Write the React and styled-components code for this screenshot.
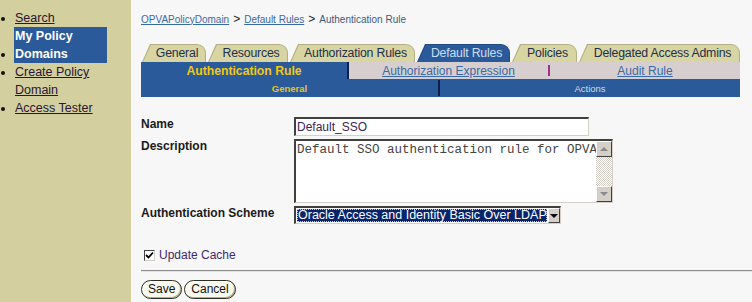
import styled, { createGlobalStyle } from "styled-components";

const GlobalStyle = createGlobalStyle`
  body {
    margin: 0;
    background: #f7f7f7;
    font-family: "Liberation Sans", Arial, sans-serif;
    overflow: hidden;
  }
`;

const tabs = [
  { label: "General", width: 64 },
  { label: "Resources", width: 80 },
  { label: "Authorization Rules", width: 125 },
  { label: "Default Rules", width: 93, active: true },
  { label: "Policies", width: 65 },
  { label: "Delegated Access Admins", width: 161 },
];

export default function App() {
  return (
    <Page>
      <GlobalStyle />
      <Sidebar>
        <NavList>
          <NavItem><NavLink href="#">Search</NavLink></NavItem>
          <NavItem><NavCurrent>My Policy Domains</NavCurrent></NavItem>
          <NavItem><NavLink href="#">Create Policy Domain</NavLink></NavItem>
          <NavItem><NavLink href="#">Access Tester</NavLink></NavItem>
        </NavList>
      </Sidebar>
      <Main>
        <Crumbs>
          <CrumbLink href="#">OPVAPolicyDomain</CrumbLink>
          <CrumbSep>&gt;</CrumbSep>
          <CrumbLink href="#">Default Rules</CrumbLink>
          <CrumbSep>&gt;</CrumbSep>
          <CrumbText>Authentication Rule</CrumbText>
        </Crumbs>

        <TabRow>
          {tabs.map(t => (
            <Tab key={t.label} $w={t.width} $active={t.active}>
              <span>{t.label}</span>
            </Tab>
          ))}
        </TabRow>

        <SubTabs>
          <SubCurrent>Authentication Rule</SubCurrent>
          <SubCell><SubLink href="#">Authorization Expression</SubLink></SubCell>
          <SubSep />
          <SubCell><SubLink href="#">Audit Rule</SubLink></SubCell>
        </SubTabs>
        <SectionBar>
          <SectionCell $current>General</SectionCell>
          <SectionCell>Actions</SectionCell>
        </SectionBar>

        <Form>
          <Label>Name</Label>
          <TextInput>Default_SSO</TextInput>
          <Label>Description</Label>
          <TextArea>
            <AreaText>Default SSO authentication rule for OPVA</AreaText>
            <ScrollBar>
              <ScrollBtn><Arrow $up /></ScrollBtn>
              <ScrollTrack />
              <ScrollBtn><Arrow /></ScrollBtn>
            </ScrollBar>
          </TextArea>
          <Label>Authentication Scheme</Label>
          <Select>
            <SelectValue><span>Oracle Access and Identity Basic Over LDAP</span></SelectValue>
            <SelectBtn><Arrow $dark /></SelectBtn>
          </Select>
        </Form>

        <CheckRow>
          <CheckBox>
            <svg width="9" height="9" viewBox="0 0 9 9">
              <path d="M1 4 L3.5 6.5 L8 1.5" stroke="#000" strokeWidth="1.8" fill="none" />
            </svg>
          </CheckBox>
          <CheckLabel>Update Cache</CheckLabel>
        </CheckRow>

        <Rule />

        <Buttons>
          <Button>Save</Button>
          <Button>Cancel</Button>
        </Buttons>
      </Main>
    </Page>
  );
}

const Page = styled.div`
  display: flex;
  height: 302px;
`;

const Sidebar = styled.div`
  width: 131px;
  flex-shrink: 0;
  background: #d3cf9e;
`;

const NavList = styled.ul`
  margin: 0;
  padding: 9px 0 0 15px;
  list-style: disc;
  font-size: 12.5px;
  line-height: 18px;
  color: #111;
`;

const NavItem = styled.li``;

const NavLink = styled.a`
  color: #2a1630;
  text-decoration: underline;
`;

const NavCurrent = styled.span`
  display: inline-block;
  width: 92px;
  background: #2b5a9b;
  color: #fff;
  font-weight: bold;
  padding-left: 1px;
  margin-left: -1px;
`;

const Main = styled.div`
  flex: 1;
  padding: 12px 0 0 10px;
`;

const Crumbs = styled.div`
  height: 14px;
  display: flex;
  align-items: center;
  font-size: 10px;
`;

const CrumbLink = styled.a`
  color: #3a6aa6;
  text-decoration: underline;
`;

const CrumbSep = styled.span`
  font-size: 12px;
  color: #222;
  margin: 0 4px;
`;

const CrumbText = styled.span`
  color: #3d5c80;
`;

const TabRow = styled.div`
  display: flex;
  gap: 2px;
  margin: 18px 0 0 1px;
  height: 18px;
  width: 598px;
`;

const Tab = styled.div`
  position: relative;
  width: ${p => p.$w}px;
  height: 18px;
  display: flex;
  align-items: center;
  justify-content: center;
  padding-left: 6px;
  box-sizing: border-box;
  font-size: 12.3px;
  letter-spacing: -0.2px;
  color: ${p => (p.$active ? "#c9ddf6" : "#1d2f4c")};
  background: ${p => (p.$active ? "#1f4a86" : "#b3af84")};
  clip-path: polygon(0 100%, 8px 0, 100% 0, 100% 100%);
  border-top-right-radius: 9px;
  &::before {
    content: "";
    position: absolute;
    inset: 1px 1px 0 1px;
    background: ${p => (p.$active ? "#2b5a9b" : "#d8d5a3")};
    clip-path: polygon(0 100%, 8px 0, 100% 0, 100% 100%);
    border-top-right-radius: 8px;
  }
  span {
    position: relative;
  }
`;

const SubTabs = styled.div`
  display: grid;
  grid-template-columns: 208px 199px 2px 1fr;
  width: 599px;
  height: 17px;
  background: #d7cfcf;
`;

const SubCurrent = styled.div`
  background: #2b5a9b;
  border-right: 2px solid #0d1f4c;
  color: #f2c811;
  font-weight: bold;
  font-size: 12.2px;
  display: flex;
  align-items: center;
  justify-content: center;
`;

const SubCell = styled.div`
  display: flex;
  align-items: center;
  justify-content: center;
`;

const SubLink = styled.a`
  color: #3a6aa6;
  font-size: 12px;
  text-decoration: underline;
`;

const SubSep = styled.div`
  align-self: center;
  height: 11px;
  background: #a0308c;
`;

const SectionBar = styled.div`
  display: grid;
  grid-template-columns: 299px 1fr;
  width: 599px;
  height: 18px;
  background: #2b5a9b;
`;

const SectionCell = styled.div`
  display: flex;
  align-items: center;
  justify-content: center;
  font-size: 9.5px;
  font-weight: ${p => (p.$current ? "bold" : "normal")};
  color: ${p => (p.$current ? "#e8c21a" : "#d6d9de")};
  border-right: ${p => (p.$current ? "2px solid #0d1f4c" : "none")};
  margin: ${p => (p.$current ? "1px 0" : "0")};
`;

const Form = styled.div`
  display: grid;
  grid-template-columns: 153px auto;
  row-gap: 3px;
  margin-top: 20px;
  align-items: start;
`;

const Label = styled.div`
  font-size: 12px;
  font-weight: bold;
  line-height: 14px;
  color: #1a1a1a;
`;

const sunken = `
  box-sizing: border-box;
  border-top: 2px solid #404040;
  border-left: 2px solid #404040;
  border-right: 1px solid #d4d0c8;
  border-bottom: 1px solid #d4d0c8;
  background: #fff;
`;

const TextInput = styled.div`
  ${sunken}
  width: 295px;
  height: 19px;
  font-size: 12px;
  line-height: 16px;
  padding-left: 1px;
  color: #3a2458;
`;

const TextArea = styled.div`
  ${sunken}
  width: 319px;
  height: 64px;
  display: flex;
`;

const AreaText = styled.div`
  flex: 1;
  font-family: "Liberation Mono", "Courier New", monospace;
  font-size: 12.5px;
  line-height: 15px;
  color: #444;
  padding: 2px 0 0 1px;
  white-space: nowrap;
  overflow: hidden;
`;

const ScrollBar = styled.div`
  width: 16px;
  display: flex;
  flex-direction: column;
`;

const ScrollBtn = styled.div`
  height: 16px;
  box-sizing: border-box;
  background: #d4d0c8;
  border-top: 1px solid #fff;
  border-left: 1px solid #fff;
  border-right: 1px solid #404040;
  border-bottom: 1px solid #404040;
  display: flex;
  align-items: center;
  justify-content: center;
`;

const ScrollTrack = styled.div`
  flex: 1;
  background: repeating-conic-gradient(#d4d0c8 0 25%, #fff 0 50%) 0 0 / 2px 2px;
`;

const Arrow = styled.span`
  width: 0;
  height: 0;
  border-left: 4px solid transparent;
  border-right: 4px solid transparent;
  ${p =>
    p.$up
      ? "border-bottom: 4px solid #8a8a8a;"
      : `border-top: 4px solid ${p.$dark ? "#000" : "#8a8a8a"};`}
`;

const Select = styled.div`
  ${sunken}
  width: 267px;
  height: 18px;
  display: flex;
`;

const SelectValue = styled.div`
  flex: 1;
  padding: 1px;
  span {
    display: block;
    height: 100%;
    box-sizing: border-box;
    background: #0a246a;
    color: #fff;
    font-size: 12.5px;
    line-height: 13px;
    padding-left: 1px;
    outline: 1px dotted #f0d060;
    outline-offset: -1px;
    white-space: nowrap;
    overflow: hidden;
  }
`;

const SelectBtn = styled(ScrollBtn)`
  width: 16px;
  height: 100%;
`;

const CheckRow = styled.div`
  display: flex;
  align-items: center;
  gap: 4px;
  margin: 24px 0 0 3px;
  height: 14px;
`;

const CheckBox = styled.div`
  width: 11px;
  height: 11px;
  box-sizing: border-box;
  border-top: 1px solid #404040;
  border-left: 1px solid #404040;
  border-right: 1px solid #d4d0c8;
  border-bottom: 1px solid #d4d0c8;
  background: #fff;
  display: flex;
  align-items: center;
  justify-content: center;
`;

const CheckLabel = styled.span`
  font-size: 12px;
  color: #3f2a6c;
`;

const Rule = styled.div`
  margin-top: 8px;
  height: 0;
  border-top: 1px solid #8c8c8c;
  border-bottom: 1px solid #e4e4e4;
`;

const Buttons = styled.div`
  display: flex;
  gap: 2px;
  margin-top: 8px;
`;

const Button = styled.button`
  height: 19px;
  padding: 0 6px;
  border: 1px solid #2e2e20;
  border-radius: 10px;
  background: #f8f8ee;
  box-shadow: inset -1px -1px 0 #b3ae86, inset 1px 1px 0 #fff;
  font-family: "Liberation Sans", Arial, sans-serif;
  font-size: 12px;
  color: #111;
  line-height: 15px;
`;
